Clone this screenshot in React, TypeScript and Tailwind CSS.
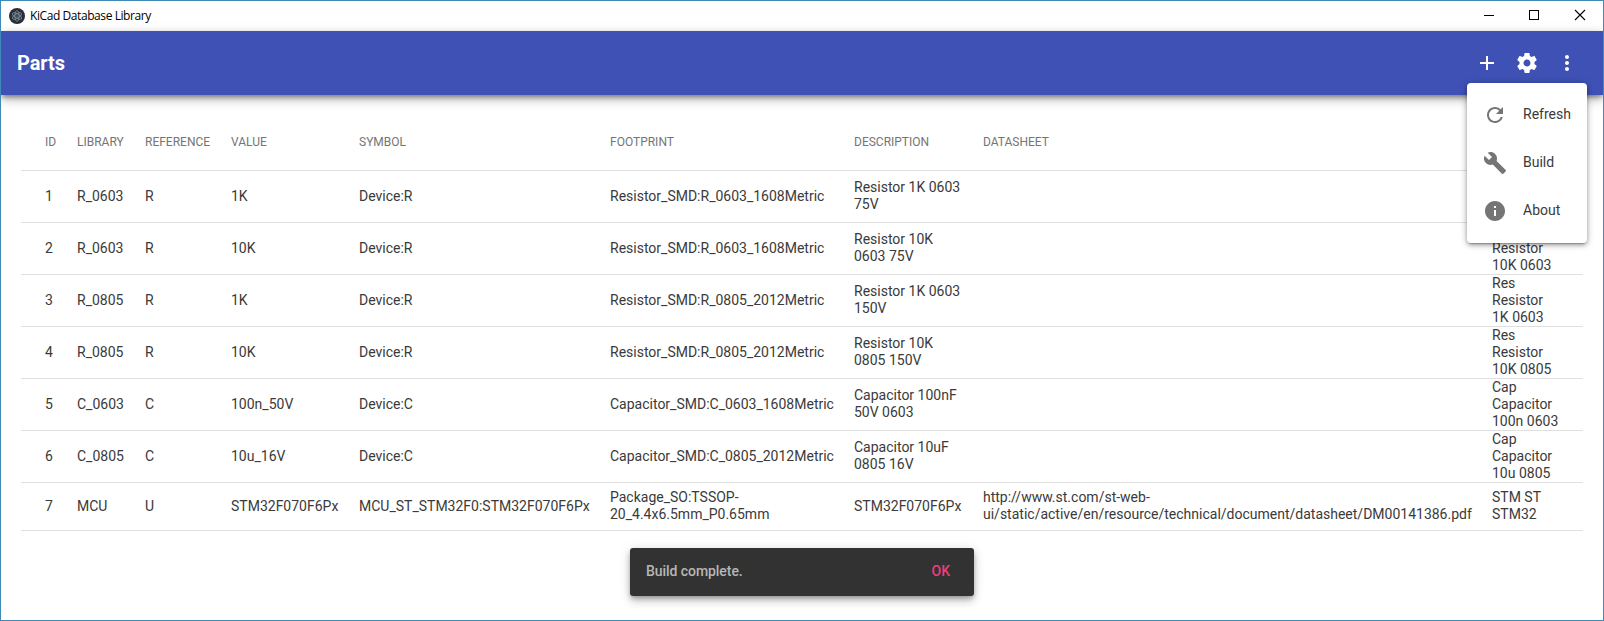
import React from "react";
import { MdAdd, MdMoreVert, MdRefresh, MdBuild, MdInfo } from "react-icons/md";

type Part = {
  id: number;
  library: string;
  reference: string;
  value: string;
  symbol: string;
  footprint: string;
  description: string;
  datasheet: string;
  keywords: string;
};

const parts: Part[] = [
  { id: 1, library: "R_0603", reference: "R", value: "1K", symbol: "Device:R", footprint: "Resistor_SMD:R_0603_1608Metric", description: "Resistor 1K 0603\n75V", datasheet: "", keywords: "" },
  { id: 2, library: "R_0603", reference: "R", value: "10K", symbol: "Device:R", footprint: "Resistor_SMD:R_0603_1608Metric", description: "Resistor 10K\n0603 75V", datasheet: "", keywords: "\nResistor\n10K 0603" },
  { id: 3, library: "R_0805", reference: "R", value: "1K", symbol: "Device:R", footprint: "Resistor_SMD:R_0805_2012Metric", description: "Resistor 1K 0603\n150V", datasheet: "", keywords: "Res\nResistor\n1K 0603" },
  { id: 4, library: "R_0805", reference: "R", value: "10K", symbol: "Device:R", footprint: "Resistor_SMD:R_0805_2012Metric", description: "Resistor 10K\n0805 150V", datasheet: "", keywords: "Res\nResistor\n10K 0805" },
  { id: 5, library: "C_0603", reference: "C", value: "100n_50V", symbol: "Device:C", footprint: "Capacitor_SMD:C_0603_1608Metric", description: "Capacitor 100nF\n50V 0603", datasheet: "", keywords: "Cap\nCapacitor\n100n 0603" },
  { id: 6, library: "C_0805", reference: "C", value: "10u_16V", symbol: "Device:C", footprint: "Capacitor_SMD:C_0805_2012Metric", description: "Capacitor 10uF\n0805 16V", datasheet: "", keywords: "Cap\nCapacitor\n10u 0805" },
  { id: 7, library: "MCU", reference: "U", value: "STM32F070F6Px", symbol: "MCU_ST_STM32F0:STM32F070F6Px", footprint: "Package_SO:TSSOP-\n20_4.4x6.5mm_P0.65mm", description: "STM32F070F6Px", datasheet: "http://www.st.com/st-web-\nui/static/active/en/resource/technical/document/datasheet/DM00141386.pdf", keywords: "STM ST\nSTM32" },
];

const columns = ["ID", "LIBRARY", "REFERENCE", "VALUE", "SYMBOL", "FOOTPRINT", "DESCRIPTION", "DATASHEET", ""];

const rowGrid = "grid grid-cols-[32px_68px_86px_128px_251px_244px_129px_509px_91px] items-center border-b border-[#e0e0e0] pl-6";

function TitleBar() {
  return (
    <div className="flex h-[30px] shrink-0 items-center bg-white pl-2">
      <svg className="size-4" viewBox="0 0 16 16" fill="none">
        <circle cx="8" cy="8" r="8" fill="#2b2e3a" />
        <g stroke="#a9c3cc" strokeWidth="0.7" opacity="0.75">
          <ellipse cx="8" cy="8" rx="5.2" ry="2.1" transform="rotate(30 8 8)" />
          <ellipse cx="8" cy="8" rx="5.2" ry="2.1" transform="rotate(90 8 8)" />
          <ellipse cx="8" cy="8" rx="5.2" ry="2.1" transform="rotate(150 8 8)" />
        </g>
        <circle cx="8" cy="8" r="0.6" fill="#a9c3cc" />
      </svg>
      <span className="ml-[5px] font-['Open_Sans',sans-serif] text-[12px] leading-4 tracking-[-0.42px] text-black">KiCad Database Library</span>
      <div className="ml-auto flex h-full text-black">
        <svg className="h-[30px] w-[45px]" viewBox="0 0 45 30" shapeRendering="crispEdges">
          <path d="M17 14h10v1H17z" fill="currentColor" />
        </svg>
        <svg className="h-[30px] w-[45px]" viewBox="0 0 45 30" shapeRendering="crispEdges">
          <path d="M17.5 9.5h9v9h-9z" fill="none" stroke="currentColor" />
        </svg>
        <svg className="h-[30px] w-[46px]" viewBox="0 0 46 30">
          <path d="M18 9l10 10M28 9l-10 10" fill="none" stroke="currentColor" strokeWidth="1.1" />
        </svg>
      </div>
    </div>
  );
}

function Toolbar() {
  return (
    <header className="relative z-10 flex h-16 shrink-0 items-center bg-[#3f51b5] px-4 text-white shadow-[0_3px_5px_-1px_rgba(0,0,0,0.4),0_6px_10px_0_rgba(0,0,0,0.16),0_1px_10px_0_rgba(0,0,0,0.12)]">
      <h1 className="text-[20px] font-bold leading-none tracking-[-0.1px]">Parts</h1>
      <div className="ml-auto flex">
        <button className="flex size-10 items-center justify-center"><MdAdd size={24} /></button>
        <button className="flex size-10 items-center justify-center">
          <svg className="size-6" viewBox="0 0 24 24" fill="currentColor">
            <path d="M19.43 12.98c.04-.32.07-.64.07-.98s-.03-.66-.07-.98l2.11-1.65c.19-.15.24-.42.12-.64l-2-3.46c-.12-.22-.39-.3-.61-.22l-2.49 1c-.52-.4-1.08-.73-1.69-.98l-.38-2.65C14.46 2.18 14.25 2 14 2h-4c-.25 0-.46.18-.49.42l-.38 2.65c-.61.25-1.17.59-1.69.98l-2.49-1c-.23-.09-.49 0-.61.22l-2 3.46c-.13.22-.07.49.12.64l2.11 1.65c-.04.32-.07.65-.07.98s.03.66.07.98l-2.11 1.65c-.19.15-.24.42-.12.64l2 3.46c.12.22.39.3.61.22l2.49-1c.52.4 1.08.73 1.69.98l.38 2.65c.03.24.24.42.49.42h4c.25 0 .46-.18.49-.42l.38-2.65c.61-.25 1.17-.59 1.69-.98l2.49 1c.23.09.49 0 .61-.22l2-3.46c.12-.22.07-.49-.12-.64l-2.11-1.65zM12 15.5c-1.93 0-3.5-1.57-3.5-3.5s1.57-3.5 3.5-3.5 3.5 1.57 3.5 3.5-1.57 3.5-3.5 3.5z" />
          </svg>
        </button>
        <button className="flex size-10 items-center justify-center">
          <MdMoreVert size={24} />
        </button>
      </div>
    </header>
  );
}

function PartsTable() {
  return (
    <div className="mx-5 mt-5 text-[14px] leading-[17px] text-[#3a3a3a]">
      <div className={`${rowGrid} h-14 text-[12px] text-[#757575]`}>
        {columns.map((c, i) => <span key={i}>{c}</span>)}
      </div>
      {parts.map((p) => (
        <div key={p.id} className={`${rowGrid} whitespace-pre ${p.id === 7 ? "h-12" : "h-[52px]"}`}>
          <span>{p.id}</span>
          <span>{p.library}</span>
          <span>{p.reference}</span>
          <span>{p.value}</span>
          <span>{p.symbol}</span>
          <span className={p.id === 7 ? "pb-px" : ""}>{p.footprint}</span>
          <span className={p.id === 7 ? "" : "pb-px"}>{p.description}</span>
          <span className="pb-px">{p.datasheet}</span>
          <span className={p.id === 7 ? "pb-px" : ""}>{p.keywords}</span>
        </div>
      ))}
    </div>
  );
}

const menu = [
  { label: "Refresh", Icon: MdRefresh },
  { label: "Build", Icon: MdBuild },
  { label: "About", Icon: MdInfo },
];

function OverflowMenu() {
  return (
    <div className="absolute right-4 top-[82px] z-20 w-[120px] rounded bg-white py-2 shadow-[0_3px_1px_-2px_rgba(0,0,0,0.2),0_2px_4px_0_rgba(0,0,0,0.3),0_1px_8px_0_rgba(0,0,0,0.2)]">
      {menu.map(({ label, Icon }) => (
        <div key={label} className="flex h-12 items-center pl-4 text-[14px] leading-none text-[#3a3a3a]">
          <Icon size={24} className="mr-4 text-[#757575]" />
          <span className="pb-0.5">{label}</span>
        </div>
      ))}
    </div>
  );
}

function Snackbar() {
  return (
    <div className="absolute bottom-6 left-[629px] flex h-12 w-[344px] items-center rounded-[3px] bg-[#323232] pl-4 pr-6 text-[14px] font-medium leading-none shadow-[0_3px_5px_-1px_rgba(0,0,0,0.3),0_6px_10px_0_rgba(0,0,0,0.14),0_1px_12px_0_rgba(0,0,0,0.12)]">
      <span className="pb-0.5 tracking-[-0.06px] text-[#b7b7b7]">Build complete.</span>
      <span className="ml-auto pb-0.5 text-[#ee3d79]">OK</span>
    </div>
  );
}

export default function App() {
  return (
    <div className="relative flex h-[621px] w-[1604px] flex-col overflow-hidden border border-[#3f8ab9] bg-white font-[Roboto,sans-serif]">
      <TitleBar />
      <Toolbar />
      <PartsTable />
      <OverflowMenu />
      <Snackbar />
    </div>
  );
}
